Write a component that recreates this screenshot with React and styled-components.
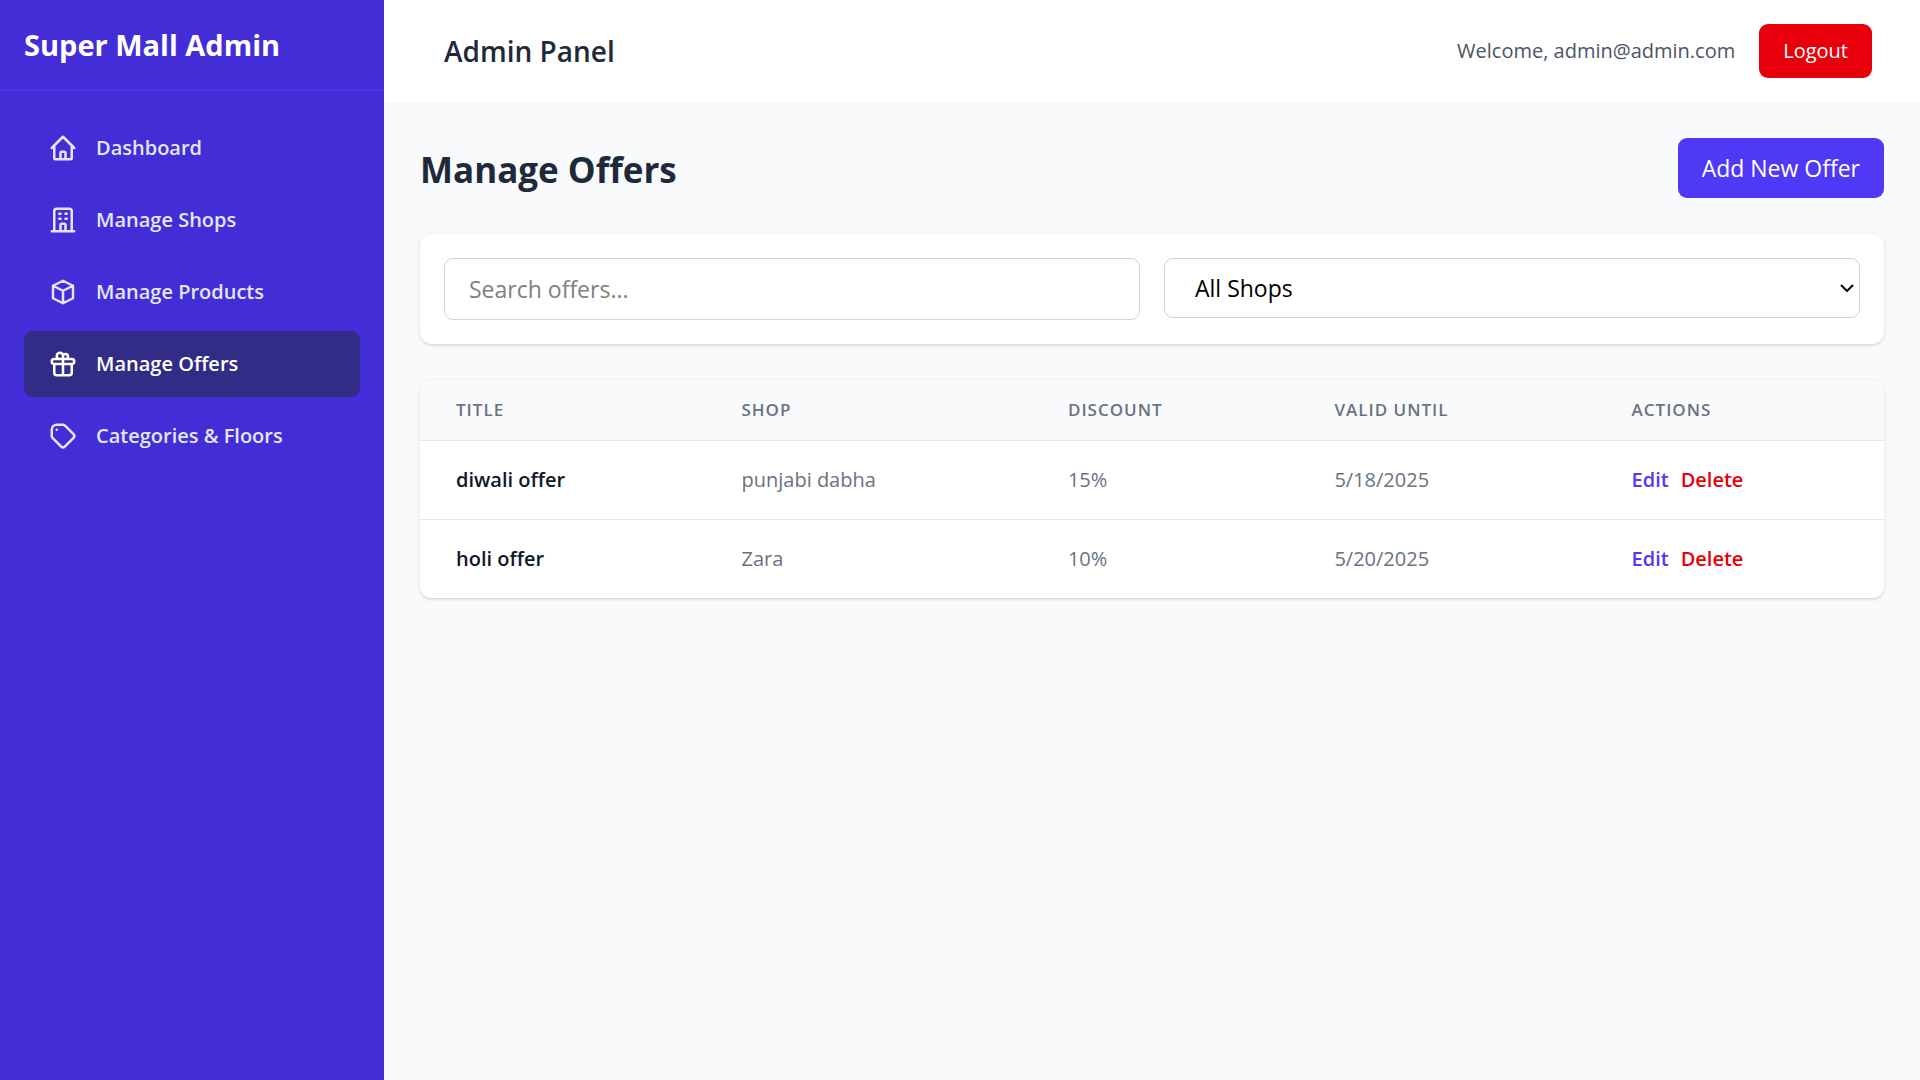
import React, { useState } from "react";
import styled, { createGlobalStyle } from "styled-components";
import {
  HiOutlineHome,
  HiOutlineOfficeBuilding,
  HiOutlineCube,
  HiOutlineGift,
  HiOutlineTag,
} from "react-icons/hi";

const GlobalStyle = createGlobalStyle`
  *, *::before, *::after { box-sizing: border-box; }
  body {
    margin: 0;
    background: #f9fafb;
    font-family: "Segoe UI", "Open Sans", "Noto Sans", sans-serif;
    font-size: 23px;
    line-height: 36px;
  }
  h1, h2 { margin: 0; }
  button, input, select { font: inherit; }
`;

const Layout = styled.div`
  display: flex;
  min-height: 100vh;
`;

const Sidebar = styled.aside`
  flex: 0 0 384px;
  background: #432dd7;
  color: #ffffff;
`;

const Brand = styled.h1`
  padding: 24px;
  border-bottom: 1px solid #4f39f6;
  font-size: 29px;
  font-weight: 700;
  line-height: 42px;
`;

const Nav = styled.nav`
  display: flex;
  flex-direction: column;
  gap: 6px;
  padding: 24px;
`;

const NavLink = styled.a`
  display: flex;
  align-items: center;
  gap: 18px;
  padding: 18px 24px;
  border-radius: 9px;
  background: ${(p) => (p.$active ? "#312c85" : "transparent")};
  color: ${(p) => (p.$active ? "#ffffff" : "#e0e7ff")};
  font-size: 20px;
  font-weight: 600;
  line-height: 30px;
  text-decoration: none;

  svg {
    width: 30px;
    height: 30px;
    flex-shrink: 0;
  }
`;

const Content = styled.div`
  flex: 1;
  min-width: 0;
`;

const TopBar = styled.header`
  display: flex;
  align-items: center;
  justify-content: space-between;
  padding: 24px 48px 24px 60px;
  background: #ffffff;
`;

const TopTitle = styled.h2`
  color: #1e2939;
  font-size: 28px;
  font-weight: 600;
  line-height: 42px;
`;

const Account = styled.div`
  display: flex;
  align-items: center;
  gap: 24px;
  color: #4a5565;
  font-size: 20px;
  line-height: 30px;
`;

const Button = styled.button`
  padding: 12px 24px;
  border: 0;
  border-radius: 9px;
  background: ${(p) => (p.$danger ? "#e7000b" : "#4f39f6")};
  color: #ffffff;
  cursor: pointer;
`;

const Main = styled.main`
  display: flex;
  flex-direction: column;
  gap: 36px;
  padding: 36px;
`;

const PageHead = styled.div`
  display: flex;
  align-items: flex-end;
  justify-content: space-between;
`;

const PageTitle = styled.h2`
  color: #1e2939;
  font-size: 35px;
  font-weight: 700;
  line-height: 56px;
`;

const Card = styled.section`
  overflow: hidden;
  border-radius: 12px;
  background: #ffffff;
  box-shadow: 0 1px 4px rgba(0, 0, 0, 0.1), 0 2px 3px -1px rgba(0, 0, 0, 0.1);
`;

const Filters = styled(Card)`
  display: grid;
  grid-template-columns: 1fr 1fr;
  align-items: start;
  gap: 24px;
  padding: 24px;
`;

const SearchInput = styled.input`
  width: 100%;
  height: 62px;
  padding: 12px 24px;
  border: 1px solid #d1d5dc;
  border-radius: 9px;
  background: #ffffff;
  color: #000000;

  &::placeholder {
    color: #808080;
  }
`;

const SelectBox = styled.div`
  position: relative;

  svg {
    position: absolute;
    top: 50%;
    right: 6px;
    width: 14px;
    height: 8px;
    margin-top: -4px;
    pointer-events: none;
  }
`;

const ShopSelect = styled.select`
  display: block;
  width: 100%;
  height: 60px;
  padding: 0 30px;
  border: 1px solid #d1d5dc;
  border-radius: 9px;
  background: #ffffff;
  color: #000000;
  appearance: none;
`;

const Table = styled.table`
  width: 100%;
  table-layout: fixed;
  border-spacing: 0;
  font-size: 20px;
  line-height: 30px;
`;

const Col = styled.col`
  width: ${(p) => p.$width};
`;

const HeadCell = styled.th`
  padding: 18px 36px;
  border-bottom: 1px solid #e5e7eb;
  background: #f9fafb;
  color: #6a7282;
  font-size: 17px;
  font-weight: 600;
  line-height: 24px;
  letter-spacing: 1px;
  text-align: left;
  text-transform: uppercase;
`;

const Cell = styled.td`
  padding: 24px 36px;
  color: ${(p) => (p.$strong ? "#101828" : "#6a7282")};
  font-weight: ${(p) => (p.$strong ? 600 : 400)};

  tr + tr > & {
    border-top: 1px solid #e5e7eb;
  }
`;

const Actions = styled.div`
  display: flex;
  gap: 12px;
`;

const TextButton = styled.button`
  padding: 0;
  border: 0;
  background: none;
  color: ${(p) => (p.$danger ? "#e7000b" : "#4f39f6")};
  font-weight: 600;
  cursor: pointer;
`;

const links = [
  { label: "Dashboard", icon: HiOutlineHome },
  { label: "Manage Shops", icon: HiOutlineOfficeBuilding },
  { label: "Manage Products", icon: HiOutlineCube },
  { label: "Manage Offers", icon: HiOutlineGift, active: true },
  { label: "Categories & Floors", icon: HiOutlineTag },
];

const columns = [
  { label: "Title", width: "19.5%" },
  { label: "Shop", width: "22.3%" },
  { label: "Discount", width: "18.2%" },
  { label: "Valid Until", width: "20.3%" },
  { label: "Actions", width: "19.7%" },
];

const offers = [
  { title: "diwali offer", shop: "punjabi dabha", discount: 15, until: "5/18/2025" },
  { title: "holi offer", shop: "Zara", discount: 10, until: "5/20/2025" },
];

export default function App() {
  const [query, setQuery] = useState("");
  const [shop, setShop] = useState("");

  const visible = offers.filter(
    (o) => o.title.includes(query.toLowerCase()) && (!shop || o.shop === shop)
  );

  return (
    <>
      <GlobalStyle />
      <Layout>
        <Sidebar>
          <Brand>Super Mall Admin</Brand>
          <Nav>
            {links.map(({ label, icon: Icon, active }) => (
              <NavLink
                key={label}
                href="#"
                $active={active}
                aria-current={active ? "page" : undefined}
              >
                <Icon aria-hidden="true" />
                {label}
              </NavLink>
            ))}
          </Nav>
        </Sidebar>
        <Content>
          <TopBar>
            <TopTitle>Admin Panel</TopTitle>
            <Account>
              <span>Welcome, admin@admin.com</span>
              <Button type="button" $danger>
                Logout
              </Button>
            </Account>
          </TopBar>
          <Main>
            <PageHead>
              <PageTitle>Manage Offers</PageTitle>
              <Button type="button">Add New Offer</Button>
            </PageHead>
            <Filters>
              <SearchInput
                type="text"
                aria-label="Search offers"
                placeholder="Search offers..."
                value={query}
                onChange={(e) => setQuery(e.target.value)}
              />
              <SelectBox>
                <ShopSelect
                  aria-label="Shop"
                  value={shop}
                  onChange={(e) => setShop(e.target.value)}
                >
                  <option value="">All Shops</option>
                  {offers.map((o) => (
                    <option key={o.shop} value={o.shop}>
                      {o.shop}
                    </option>
                  ))}
                </ShopSelect>
                <svg viewBox="0 0 14 8" fill="none" stroke="#000000" strokeWidth="2" aria-hidden="true">
                  <path d="M1 1l6 6 6-6" />
                </svg>
              </SelectBox>
            </Filters>
            <Card>
              <Table>
                <colgroup>
                  {columns.map((c) => (
                    <Col key={c.label} $width={c.width} />
                  ))}
                </colgroup>
                <thead>
                  <tr>
                    {columns.map((c) => (
                      <HeadCell key={c.label} scope="col">
                        {c.label}
                      </HeadCell>
                    ))}
                  </tr>
                </thead>
                <tbody>
                  {visible.map((o) => (
                    <tr key={o.title}>
                      <Cell $strong>{o.title}</Cell>
                      <Cell>{o.shop}</Cell>
                      <Cell>{o.discount}%</Cell>
                      <Cell>{o.until}</Cell>
                      <Cell>
                        <Actions>
                          <TextButton type="button">Edit</TextButton>
                          <TextButton type="button" $danger>
                            Delete
                          </TextButton>
                        </Actions>
                      </Cell>
                    </tr>
                  ))}
                </tbody>
              </Table>
            </Card>
          </Main>
        </Content>
      </Layout>
    </>
  );
}
